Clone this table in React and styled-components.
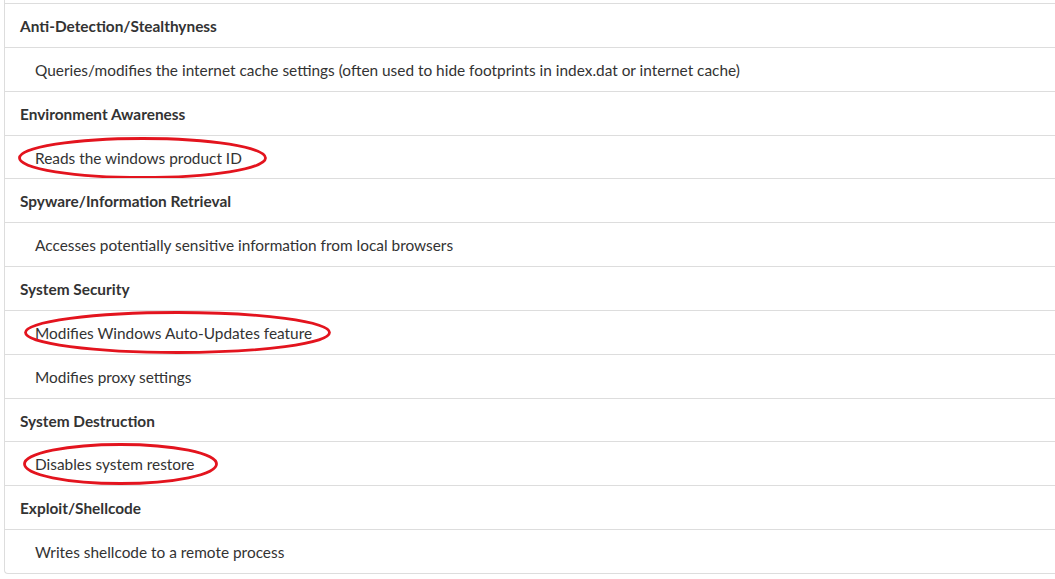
import React from "react";
import styled, { createGlobalStyle } from "styled-components";

const Global = createGlobalStyle`
  html, body { margin: 0; padding: 0; background: #fff; }
  body { font-family: Lato, "Open Sans", sans-serif; color: #333; }
`;

const Panel = styled.div`
  margin-left: 4px;
  width: 1080px;
  padding-top: 3px;
  border-left: 1px solid #ddd;
  border-bottom: 1px solid #ddd;
  border-bottom-left-radius: 4px;
`;

const Row = styled.div`
  position: relative;
  border-top: 1px solid #ddd;
  padding: 12px 15px 10px ${(p) => (p.$sub ? 30 : 15)}px;
  font-size: 15.4px;
  line-height: 20.85px;
  font-weight: ${(p) => (p.$sub ? 400 : 700)};
  color: #333;
`;

const Mark = styled.svg`
  position: absolute;
  overflow: visible;
  pointer-events: none;
`;

function Ellipse({ left, top, width, height }) {
  return (
    <Mark
      style={{ left, top, width, height }}
      viewBox={`0 0 ${width} ${height}`}
    >
      <ellipse
        cx={width / 2}
        cy={height / 2}
        rx={width / 2 - 1.5}
        ry={height / 2 - 1.5}
        fill="none"
        stroke="#e3141e"
        strokeWidth="2.8"
      />
    </Mark>
  );
}

const data = [
  { h: "Anti-Detection/Stealthyness" },
  { s: "Queries/modifies the internet cache settings (often used to hide footprints in index.dat or internet cache)" },
  { h: "Environment Awareness" },
  { s: "Reads the windows product ID", e: { left: 13, top: 1, width: 249, height: 42 } },
  { h: "Spyware/Information Retrieval" },
  { s: "Accesses potentially sensitive information from local browsers" },
  { h: "System Security" },
  { s: "Modifies Windows Auto-Updates feature", e: { left: 19, top: 0, width: 307, height: 43 } },
  { s: "Modifies proxy settings" },
  { h: "System Destruction" },
  { s: "Disables system restore", e: { left: 18, top: 1, width: 195, height: 42 } },
  { h: "Exploit/Shellcode" },
  { s: "Writes shellcode to a remote process" },
];

export default function App() {
  return (
    <>
      <Global />
      <Panel>
        {data.map((d, i) => (
          <Row key={i} $sub={!!d.s}>
            {d.h || d.s}
            {d.e && <Ellipse {...d.e} />}
          </Row>
        ))}
      </Panel>
    </>
  );
}
